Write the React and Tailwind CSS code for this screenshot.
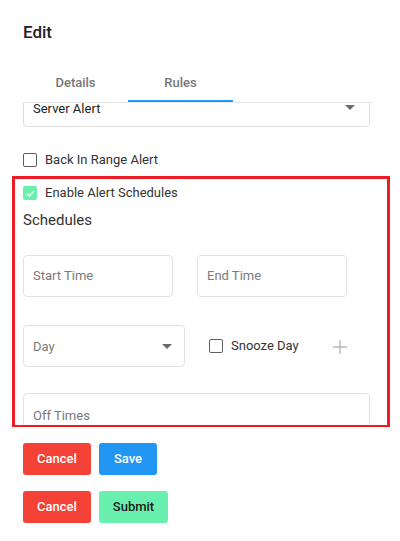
import React from 'react';

const Box = ({ checked }) =>
  checked ? (
    <span className="w-[14px] h-[14px] rounded-[2px] bg-[#69f0ae] flex items-center justify-center shrink-0">
      <svg viewBox="0 0 14 14" className="w-[11px] h-[11px]" fill="none" stroke="#fff" strokeWidth="1.6">
        <path d="M2.5 7.2l3 3 6-6.4" />
      </svg>
    </span>
  ) : (
    <span className="w-[14px] h-[14px] rounded-[2px] border-[1.5px] border-[#5f5f5f] shrink-0" />
  );

const Caret = () => (
  <svg viewBox="0 0 10 5" className="w-[10px] h-[5px]" fill="#6b6b6b">
    <path d="M0 0h10L5 5z" />
  </svg>
);

const Btn = ({ className, children }) => (
  <button className={`h-[32px] rounded-[3px] text-[13px] font-medium ${className}`}>{children}</button>
);

export default function App() {
  return (
    <div className="w-[400px] h-[541px] bg-white overflow-hidden font-['Roboto','Liberation_Sans',sans-serif] text-[#333]">
      <div className="px-[23px] pt-[22px] text-[17px] leading-[20px] font-medium text-[#222]">Edit</div>

      {/* tabs */}
      <div className="mt-[17px] ml-[23px] w-[350px] flex border-b border-[#e8e8e8]">
        <div className="w-[105px] h-[43px] flex items-center justify-center text-[13px] font-medium text-[#777] pt-[4px]">Details</div>
        <div className="w-[105px] h-[43px] flex items-center justify-center text-[13px] font-medium text-[#777] border-b-2 border-[#2196f3] pt-[6px]">
          Rules
        </div>
      </div>

      {/* scrolled form area */}
      <div className="h-[324px] overflow-hidden">
        <div className="-mt-[16px]">
          <div className="ml-[23px] w-[347px] h-[40px] border border-[#dedede] rounded-[4px] px-[9px] flex items-center justify-between text-[13px] text-[#222]">
            <span className="pt-[3px]">Server Alert</span>
            <span className="mr-[5px]"><Caret /></span>
          </div>

          <label className="mt-[26px] ml-[23px] flex items-center gap-[8px] text-[13px] h-[14px]">
            <Box />
            <span>Back In Range Alert</span>
          </label>

          <div className="mt-[9px] ml-[12px] w-[378px] h-[252px] border-[3px] border-[#ed1c24] overflow-hidden">
            <div className="pl-[8px] pt-[7px]">
              <label className="flex items-center gap-[8px] text-[13px] h-[14px]">
                <Box checked />
                <span>Enable Alert Schedules</span>
              </label>
              <div className="mt-[11px] text-[15px] leading-[18px] text-[#333]">Schedules</div>

              <div className="mt-[26px] flex gap-[24px]">
                <div className="w-[150px] h-[42px] border border-[#e2e2e2] rounded-[4px] px-[9px] flex items-center text-[13px] text-[#7a7a7a]">
                  Start Time
                </div>
                <div className="w-[150px] h-[42px] border border-[#e2e2e2] rounded-[4px] px-[9px] flex items-center text-[13px] text-[#7a7a7a]">
                  End Time
                </div>
              </div>

              <div className="mt-[28px] flex items-center">
                <div className="w-[162px] h-[42px] border border-[#e2e2e2] rounded-[4px] pl-[9px] pr-[12px] flex items-center justify-between text-[13px] text-[#7a7a7a]">
                  <span className="pt-[2px]">Day</span>
                  <Caret />
                </div>
                <label className="ml-[24px] flex items-center gap-[8px] text-[13px] text-[#333]">
                  <Box />
                  <span>Snooze Day</span>
                </label>
                <svg viewBox="0 0 14 14" className="ml-[34px] w-[14px] h-[14px] mt-[2px]" stroke="#b9b9b9" strokeWidth="1.4">
                  <path d="M7 0v14M0 7h14" />
                </svg>
              </div>

              <div className="mt-[26px] w-[347px] h-[42px] border border-[#e2e2e2] rounded-[4px] px-[9px] pt-[12px] text-[13px] text-[#7a7a7a]">
                Off Times
              </div>
            </div>
          </div>
        </div>
      </div>

      <div className="px-[23px] mt-[16px] flex flex-col gap-[16px]">
        <div className="flex gap-[8px]">
          <Btn className="w-[68px] bg-[#f44336] text-white">Cancel</Btn>
          <Btn className="w-[58px] bg-[#2196f3] text-white">Save</Btn>
        </div>
        <div className="flex gap-[8px]">
          <Btn className="w-[68px] bg-[#f44336] text-white">Cancel</Btn>
          <Btn className="w-[69px] bg-[#69f0ae] text-[#1a1a1a]">Submit</Btn>
        </div>
      </div>
    </div>
  );
}
